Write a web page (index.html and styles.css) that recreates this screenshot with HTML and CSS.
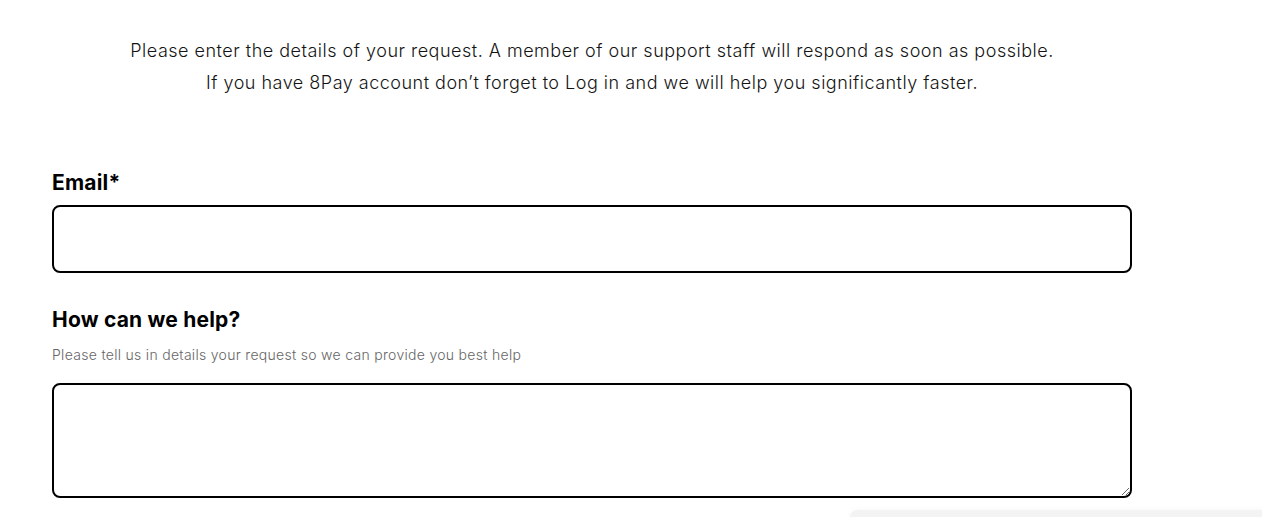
FILE: index.html
```html
<!DOCTYPE html>
<html lang="en">
<head>
<meta charset="utf-8">
<link rel="stylesheet" href="styles.css">
</head>
<body>
<main class="page">
  <p class="intro">Please enter the details of your request. A member of our support staff will respond as soon as possible.<br>If you have 8Pay account don’t forget to Log in and we will help you significantly faster.</p>
  <form class="form">
    <div class="field">
      <label class="label" for="email">Email*</label>
      <input class="input" id="email" type="email">
    </div>
    <div class="field">
      <label class="label" for="msg">How can we help?</label>
      <p class="hint">Please tell us in details your request so we can provide you best help</p>
      <textarea class="textarea" id="msg"></textarea>
    </div>
  </form>
</main>
<div class="widget"></div>
</body>
</html>
```
FILE: styles.css
```css
html, body {
  margin: 0;
  padding: 0;
  background: #fff;
  overflow: hidden;
}
body {
  font-family: Inter, "Noto Sans", sans-serif;
  color: #111;
}
.page {
  width: 1080px;
  margin-left: 52px;
  padding-top: 35px;
}
.intro {
  margin: 0;
  text-align: center;
  font-size: 18px;
  font-weight: 300;
  line-height: 32px;
  letter-spacing: 0.5px;
  color: #141414;
}
.form {
  margin-top: 71px;
  display: flex;
  flex-direction: column;
  gap: 34px;
}
.field {
  display: flex;
  flex-direction: column;
}
.label {
  font-size: 21px;
  font-weight: 700;
  line-height: 26px;
  letter-spacing: 0.2px;
  color: #000;
  margin-bottom: 9px;
}
.hint {
  margin: 3px 0 18px;
  font-size: 14px;
  font-weight: 300;
  line-height: 20px;
  letter-spacing: 0.3px;
  color: #666;
}
.input, .textarea {
  box-sizing: border-box;
  width: 1080px;
  border: 2px solid #000;
  border-radius: 8px;
  background: #fff;
  font: inherit;
  outline: none;
  margin: 0;
}
.input { height: 68px; }
.textarea { height: 115px; resize: vertical; display: block; }
.widget {
  position: absolute;
  left: 850px;
  top: 510px;
  width: 420px;
  height: 30px;
  background: #f3f3f3;
  border-radius: 8px 0 0 0;
  box-shadow: 0 0 6px rgba(0,0,0,0.04);
}
```
